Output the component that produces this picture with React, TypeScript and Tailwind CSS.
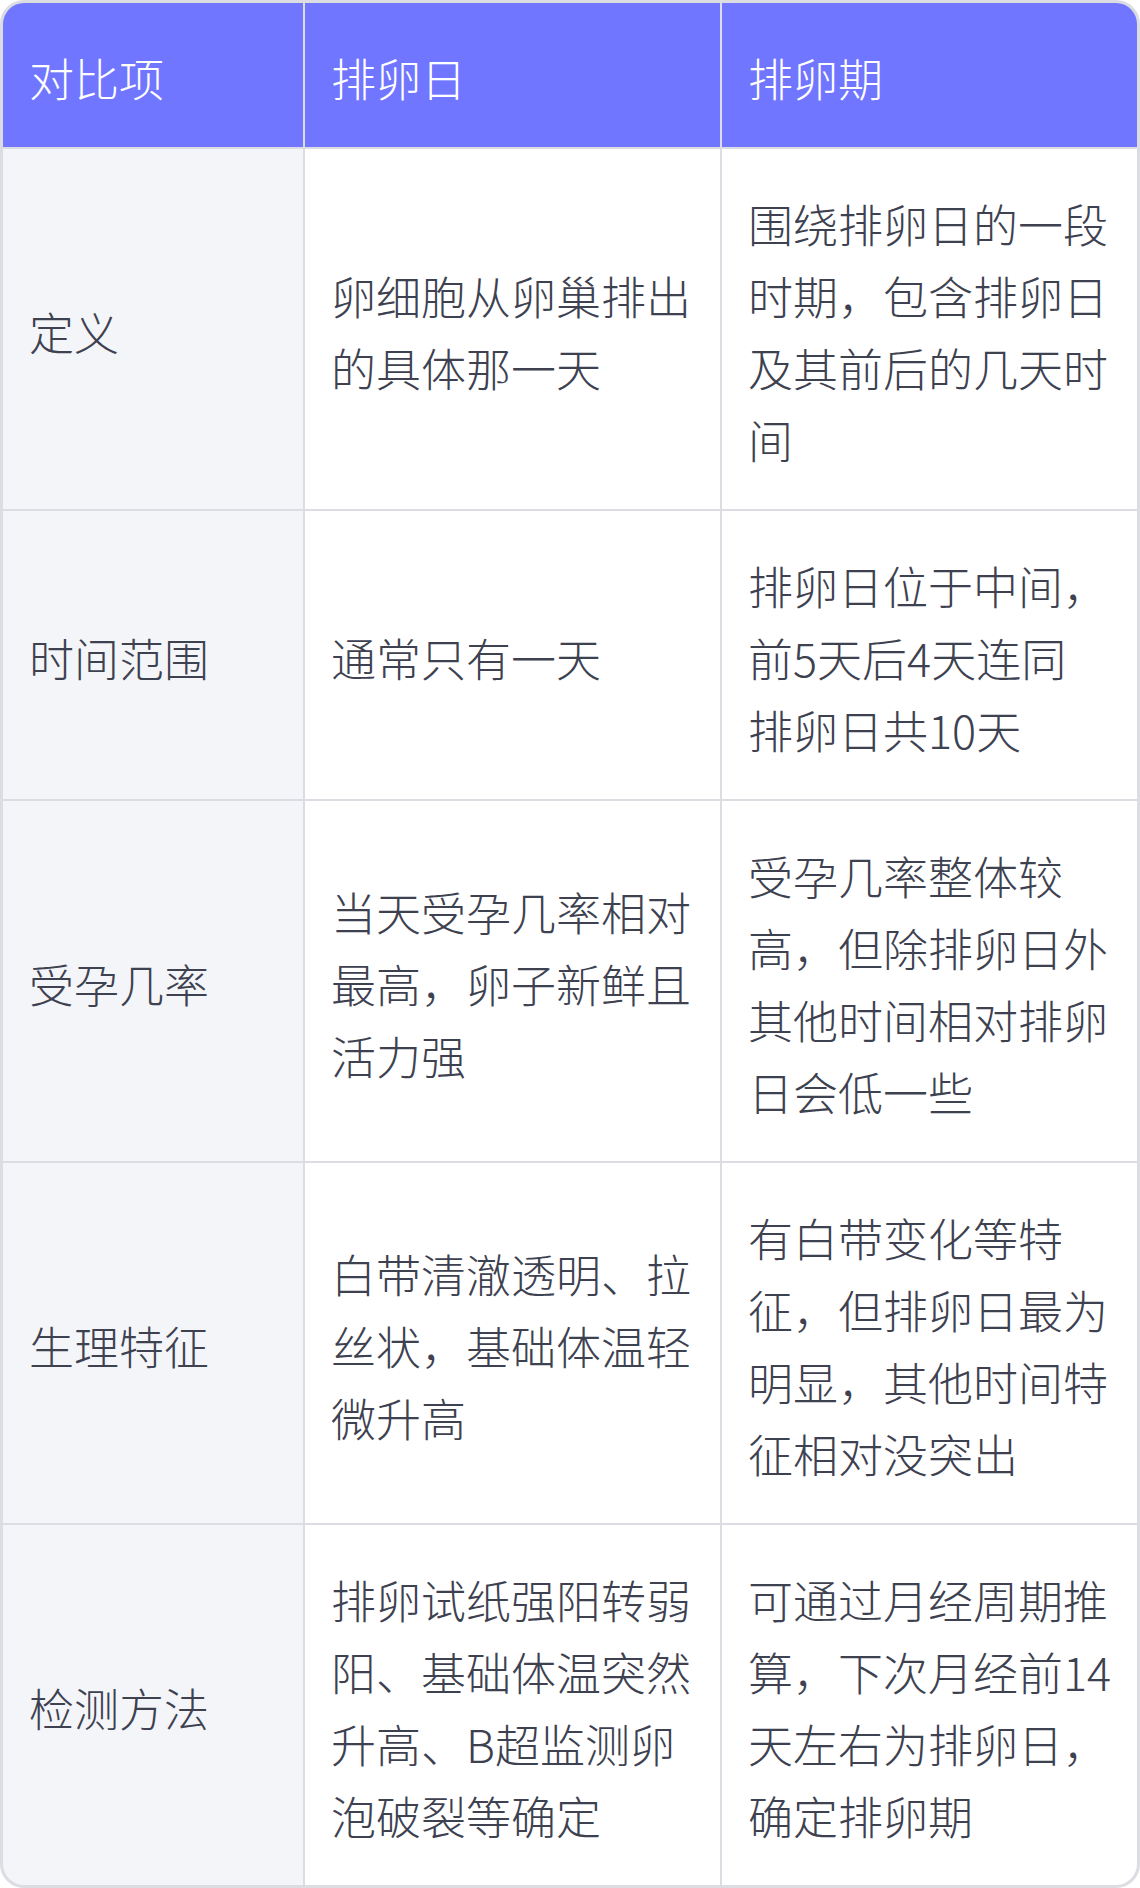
const headers = ["对比项", "排卵日", "排卵期"]

const rows: { label: string; day: string[]; period: string[] }[] = [
  {
    label: "定义",
    day: ["卵细胞从卵巢排出", "的具体那一天"],
    period: ["围绕排卵日的一段", "时期，包含排卵日", "及其前后的几天时", "间"],
  },
  {
    label: "时间范围",
    day: ["通常只有一天"],
    period: ["排卵日位于中间，", "前5天后4天连同", "排卵日共10天"],
  },
  {
    label: "受孕几率",
    day: ["当天受孕几率相对", "最高，卵子新鲜且", "活力强"],
    period: ["受孕几率整体较", "高，但除排卵日外", "其他时间相对排卵", "日会低一些"],
  },
  {
    label: "生理特征",
    day: ["白带清澈透明、拉", "丝状，基础体温轻", "微升高"],
    period: ["有白带变化等特", "征，但排卵日最为", "明显，其他时间特", "征相对没突出"],
  },
  {
    label: "检测方法",
    day: ["排卵试纸强阳转弱", "阳、基础体温突然", "升高、B超监测卵", "泡破裂等确定"],
    period: ["可通过月经周期推", "算，下次月经前14", "天左右为排卵日，", "确定排卵期"],
  },
]

function Lines({ lines }: { lines: string[] }) {
  return (
    <div>
      {lines.map((l, i) => (
        <div key={i} className="whitespace-nowrap">
          {l}
        </div>
      ))}
    </div>
  )
}

export default function App() {
  return (
    <div
      className="w-[1140px] bg-white"
      style={{ fontFamily: '"Noto Sans CJK SC", "Noto Sans", sans-serif' }}
    >
      <div className="border-[3px] border-[#dcdde2] rounded-[24px] overflow-hidden bg-[#dcdde2]">
        <div className="grid grid-cols-[300px_415px_415px] gap-[2px] text-[45px] leading-[72px] font-extralight">
          {/* header */}
          {headers.map((h) => (
            <div key={h} className="bg-[#7076ff] text-white px-[26px] pt-[39px] pb-[33px] flex items-center">
              {h}
            </div>
          ))}

          {rows.map((r) => (
            <div key={r.label} className="contents">
              <div className="bg-[#f4f5f9] text-[#3d4150] px-[26px] pt-[39px] pb-[33px] flex items-center">
                {r.label}
              </div>
              <div className="bg-white text-[#3d4150] px-[26px] pt-[39px] pb-[33px] flex items-center">
                <Lines lines={r.day} />
              </div>
              <div className="bg-white text-[#3d4150] px-[26px] pt-[39px] pb-[33px] flex items-center">
                <Lines lines={r.period} />
              </div>
            </div>
          ))}
        </div>
      </div>
    </div>
  )
}
